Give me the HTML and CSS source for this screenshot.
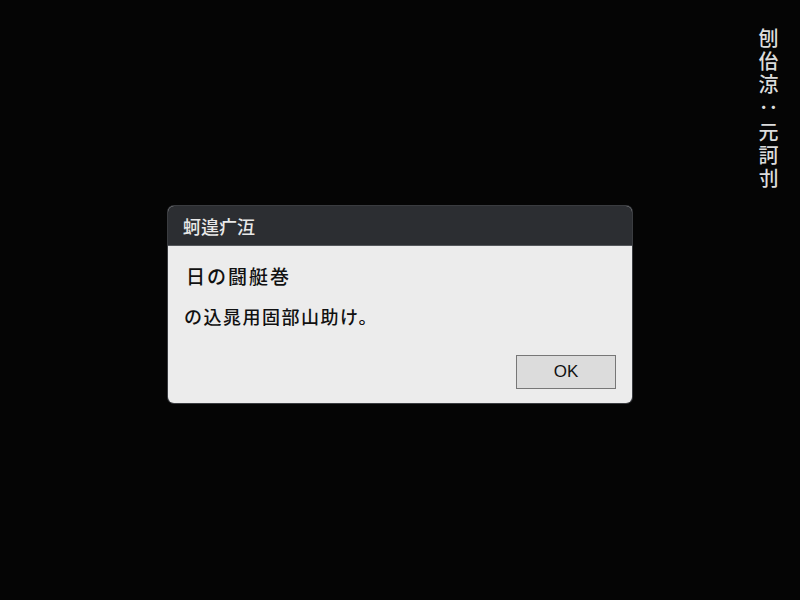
FILE: index.html
```html
<!DOCTYPE html>
<html lang="ja">
<head>
<meta charset="utf-8">
<link rel="stylesheet" href="styles.css">
</head>
<body>
<div class="screen">
  <div class="side">刨佁涼<span class="colon">：</span>元訶刌</div>
  <div class="dialog">
    <div class="titlebar">蚵遑疒沍</div>
    <div class="body">
      <p class="line1">日の闘艇巻</p>
      <p class="line2">の込晁用固部山助け。</p>
      <div class="actions"><button class="ok">OK</button></div>
    </div>
  </div>
</div>
</body>
</html>
```
FILE: styles.css
```css
html, body { margin: 0; padding: 0; background: #050505; }
.screen {
  width: 800px; height: 600px; position: relative;
  font-family: "Noto Sans CJK JP", "Noto Sans", sans-serif;
}
.side {
  position: absolute; left: 757px; top: 28px;
  writing-mode: vertical-rl;
  color: #dcdcdc; font-size: 20px; line-height: 22px; font-weight: 500;
  letter-spacing: 3px;
}
.side .colon { letter-spacing: 5px; }
.dialog {
  position: absolute; left: 168px; top: 206px;
  width: 464px; height: 197px;
  border-radius: 6px; overflow: hidden;
  background: #ececec;
  box-shadow: 0 0 0 1px #3a3c40;
  display: flex; flex-direction: column;
}
.titlebar {
  height: 40px; background: #2c2e32; color: #e8e8e8;
  font-size: 18px; line-height: 40px; padding-left: 15px; font-weight: 500;
  border-bottom: 1px solid #55585c; box-sizing: border-box;
}
.body { flex: 1; padding: 16px 16px 14px 18px; display: flex; flex-direction: column; }
.line1 { margin: 0; font-size: 19px; line-height: 28px; color: #111; letter-spacing: 2px; font-weight: 500; }
.line2 { margin: 12px 0 0 -2px; font-size: 18px; line-height: 28px; color: #111; letter-spacing: 1.5px; font-weight: 500; }
.actions { margin-top: auto; display: flex; justify-content: flex-end; }
.ok {
  width: 100px; height: 34px;
  background: #dcdcdc; border: 1px solid #777; border-radius: 0;
  font-family: "Liberation Sans", Arial, sans-serif; font-size: 17px; color: #111;
}
```
